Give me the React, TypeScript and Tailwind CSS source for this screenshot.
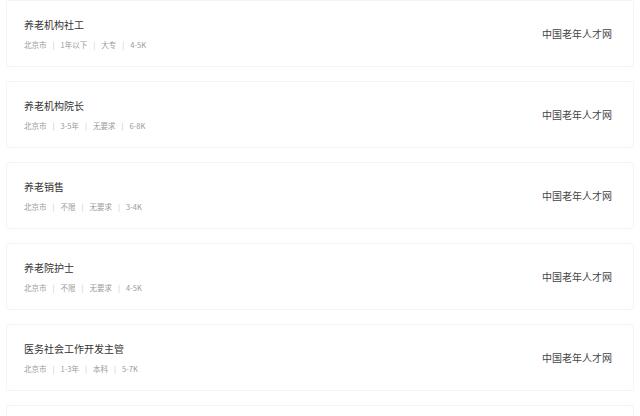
import React from 'react';

const jobs = [
    { title: '养老机构社工', tags: ['北京市', '1年以下', '大专', '4-5K'] },
    { title: '养老机构院长', tags: ['北京市', '3-5年', '无要求', '6-8K'] },
    { title: '养老销售', tags: ['北京市', '不限', '无要求', '3-4K'] },
    { title: '养老院护士', tags: ['北京市', '不限', '无要求', '4-5K'] },
    { title: '医务社会工作开发主管', tags: ['北京市', '1-3年', '本科', '5-7K'] }
];

const font = { fontFamily: '"Noto Sans CJK SC", "Noto Sans", sans-serif' };

const JobCard = ({ title, tags }: { title: string; tags: string[] }) => (
    <div className="flex h-[67px] shrink-0 items-center justify-between rounded-[3px] border border-[#f3f3f3] bg-white pl-[17px] pr-[21px]">
        <div className="flex flex-col gap-[8px]">
            <div className="text-[10px] leading-[14px] text-[#333]">{title}</div>
            <div className="flex items-center text-[7.5px] leading-[10px] text-[#9a9a9a]">
                {tags.map((t, i) => (
                    <React.Fragment key={i}>
                        {i > 0 && <span className="mx-[6px] text-[#c8c8c8]">|</span>}
                        <span>{t}</span>
                    </React.Fragment>
                ))}
            </div>
        </div>
        <div className="text-[10px] leading-[14px] text-[#444]">中国老年人才网</div>
    </div>
);

export default function App() {
    return (
        <div style={font} className="flex h-[416px] flex-col gap-[14px] overflow-hidden bg-white px-[6px]">
            {jobs.map((j, i) => (
                <JobCard key={i} title={j.title} tags={j.tags} />
            ))}
            {/* next card, only its top edge is in view */}
            <div className="h-[67px] shrink-0 rounded-[3px] border border-[#f3f3f3] bg-white" />
        </div>
    );
}
